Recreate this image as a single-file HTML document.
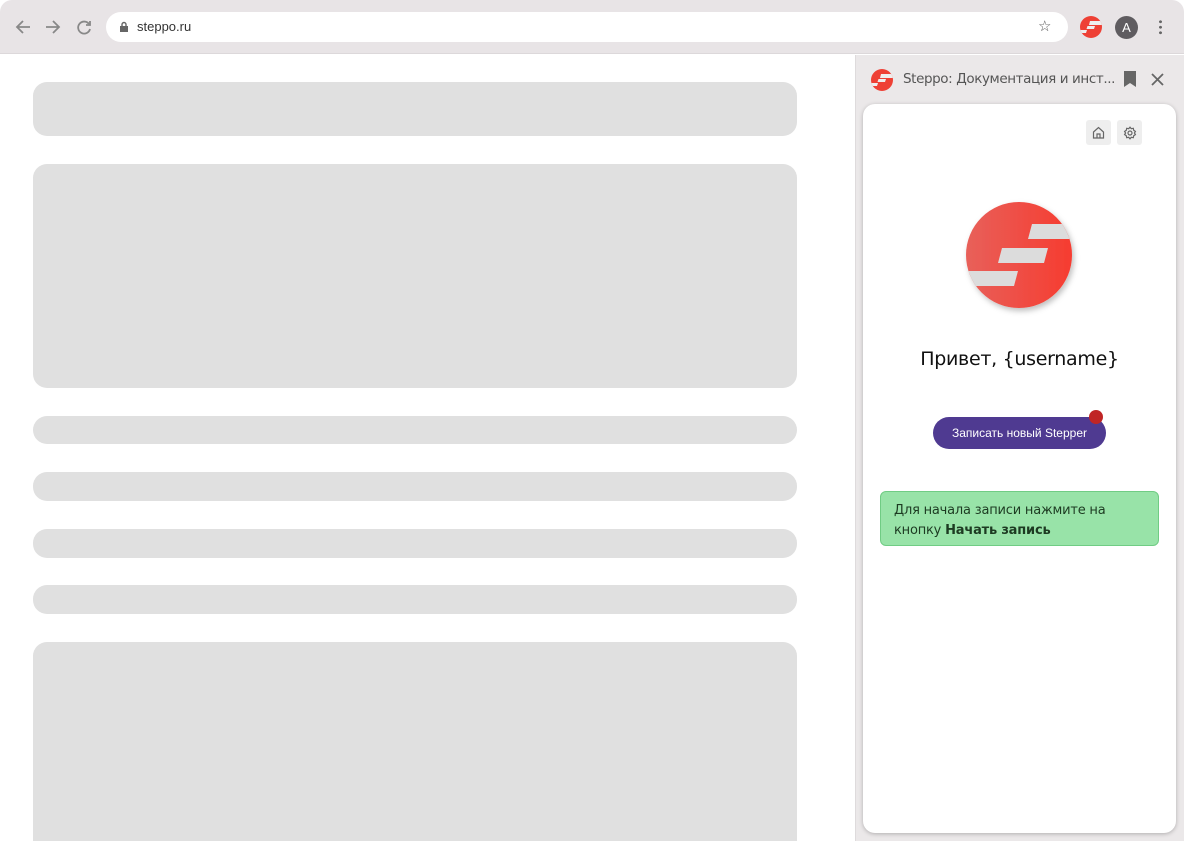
<!DOCTYPE html>
<html><head><meta charset="utf-8"><style>
*{margin:0;padding:0;box-sizing:border-box}
html,body{width:1184px;height:841px;overflow:hidden}
body{background:#fff;font-family:"Liberation Sans","DejaVu Sans",sans-serif;position:relative}
.abs{position:absolute}
.top{left:0;top:0;width:1184px;height:54px;background:#e8e4e6;border-bottom:1px solid #dcd8da;border-radius:12px 12px 0 0}
.url{left:106px;top:12px;width:962px;height:30px;background:#fff;border-radius:15px}
.sk{position:absolute;left:33px;width:764px;background:#e0e0e0}
.side{left:855px;top:55px;width:329px;height:786px;background:#ebe8e9;border-left:1px solid #dedbdc}
.card{left:863px;top:104px;width:313px;height:729px;background:#fff;border-radius:12px;box-shadow:0 1px 4px rgba(0,0,0,.25)}
.ib{width:25px;height:25px;background:#eeeeee;border-radius:3px;display:flex;align-items:center;justify-content:center}
</style></head><body>
<div class="abs top"></div>
<svg class="abs" style="left:14px;top:18px" width="80" height="18" viewBox="0 0 80 18" fill="none" stroke="#888" stroke-width="1.8">
<path d="M16 9H3M9 3L3 9l6 6"/><path d="M32 9h13M39 3l6 6-6 6"/><path d="M75 6a6 6 0 1 0 1 5"/><path d="M76 3v4h-4" /></svg>
<div class="abs url"></div>
<svg class="abs" style="left:119px;top:21px" width="10" height="12" viewBox="0 0 10 12"><rect x="1" y="5" width="8" height="6" fill="#666"/><path d="M3 5V3.5a2 2 0 0 1 4 0V5" stroke="#666" stroke-width="1.4" fill="none"/></svg>
<div class="abs" style="left:137px;top:19px;font-size:13px;color:#333">steppo.ru</div>
<div class="abs" style="left:1038px;top:17px;font-size:15px;color:#555">☆</div>
<svg class="abs" style="left:1080px;top:16px" width="22" height="22" viewBox="0 0 22 22"><defs><clipPath id="c1"><circle cx="11" cy="11" r="11"/></clipPath></defs><circle cx="11" cy="11" r="11" fill="#ee4035"/><g clip-path="url(#c1)" fill="#eee"><path d="M10 5h14v4H9z"/><path d="M7.5 10h7.5l-1 3H6.5z"/><path d="M-2 14h9l-1 3H-3z"/></g></svg>
<div class="abs" style="left:1115px;top:16px;width:23px;height:23px;border-radius:50%;background:#5f5c60;color:#fff;font-size:13px;text-align:center;line-height:23px">A</div>
<div class="abs" style="left:1159px;top:19px;width:3px;height:16px;background:radial-gradient(circle,#666 1.3px,transparent 1.6px) 0 0/3px 5.5px"></div>

<div class="sk" style="top:82px;height:54px;border-radius:14px"></div>
<div class="sk" style="top:164px;height:224px;border-radius:14px"></div>
<div class="sk" style="top:416px;height:28px;border-radius:14px"></div>
<div class="sk" style="top:472px;height:29px;border-radius:14px"></div>
<div class="sk" style="top:529px;height:29px;border-radius:14px"></div>
<div class="sk" style="top:585px;height:29px;border-radius:14px"></div>
<div class="sk" style="top:642px;height:220px;border-radius:14px"></div>

<div class="abs side"></div>
<svg class="abs" style="left:871px;top:69px" width="22" height="22" viewBox="0 0 22 22"><defs><clipPath id="c2"><circle cx="11" cy="11" r="11"/></clipPath></defs><circle cx="11" cy="11" r="11" fill="#ee4035"/><g clip-path="url(#c2)" fill="#eee"><path d="M10 5h14v4H9z"/><path d="M7.5 10h7.5l-1 3H6.5z"/><path d="M-2 14h9l-1 3H-3z"/></g></svg>
<div class="abs" style="left:903px;top:71px;font-size:13.5px;color:#555;font-family:'DejaVu Sans',sans-serif;letter-spacing:-0.4px;white-space:nowrap">Steppo: Документация и инст...</div>
<svg class="abs" style="left:1123px;top:71px" width="14" height="16" viewBox="0 0 14 16"><path d="M1 0h12v16l-6-4-6 4z" fill="#666"/></svg>
<svg class="abs" style="left:1151px;top:73px" width="13" height="13" viewBox="0 0 13 13" stroke="#666" stroke-width="1.8"><path d="M1 1l11 11M12 1L1 12"/></svg>
<div class="abs card"></div>
<div class="abs ib" style="left:1086px;top:120px"><svg width="13" height="13" viewBox="0 0 13 13" fill="none" stroke="#666" stroke-width="1.2"><path d="M1.5 6L6.5 1.5 11.5 6V12H1.5z"/><path d="M5 12V8h3v4"/></svg></div>
<div class="abs ib" style="left:1117px;top:120px"><svg width="14" height="14" viewBox="0 0 14 14" fill="none" stroke="#666" stroke-width="1.2"><circle cx="7" cy="7" r="2"/><path d="M7 1.2l1.3 1.5 2-.4.4 2 1.7 1.1-1 1.6 1 1.6-1.7 1.1-.4 2-2-.4L7 12.8l-1.3-1.5-2 .4-.4-2L1.6 8.6l1-1.6-1-1.6 1.7-1.1.4-2 2 .4z"/></svg></div>

<svg class="abs" style="left:960px;top:196px" width="125" height="125" viewBox="0 0 125 125">
<defs><linearGradient id="g" x1="0" x2="1"><stop offset="0" stop-color="#e8605a"/><stop offset="1" stop-color="#f63c30"/></linearGradient><filter id="s"><feDropShadow dx="2" dy="3" stdDeviation="3" flood-opacity=".25"/></filter><clipPath id="cc"><circle cx="59" cy="59" r="53"/></clipPath></defs>
<circle cx="59" cy="59" r="53" fill="url(#g)" filter="url(#s)"/>
<g clip-path="url(#cc)" fill="#dcdcdc">
<path d="M72 28h50v15H68z"/>
<path d="M42 52h46l-4 15H38z"/>
<path d="M-2 75h60l-4 15H-6z"/>
</g>
</svg>
<div class="abs" style="left:863px;top:348px;width:313px;text-align:center;font-size:19px;color:#111;font-family:'DejaVu Sans',sans-serif;letter-spacing:-0.3px">Привет, {username}</div>
<div class="abs" style="left:933px;top:417px;width:173px;height:32px;border-radius:16px;background:#4f3a91;color:#fff;font-size:12px;text-align:center;line-height:32px">Записать новый Stepper</div>
<div class="abs" style="left:1089px;top:410px;width:14px;height:14px;border-radius:50%;background:#c02525"></div>
<div class="abs" style="left:880px;top:491px;width:279px;height:55px;background:#98e3a8;border:1px solid #70cc84;border-radius:6px;padding:9px 13px;font-size:13px;line-height:20px;color:#1d3b22;font-family:'DejaVu Sans',sans-serif;letter-spacing:-0.2px">Для начала записи нажмите на кнопку <b>Начать запись</b></div>
</body></html>
